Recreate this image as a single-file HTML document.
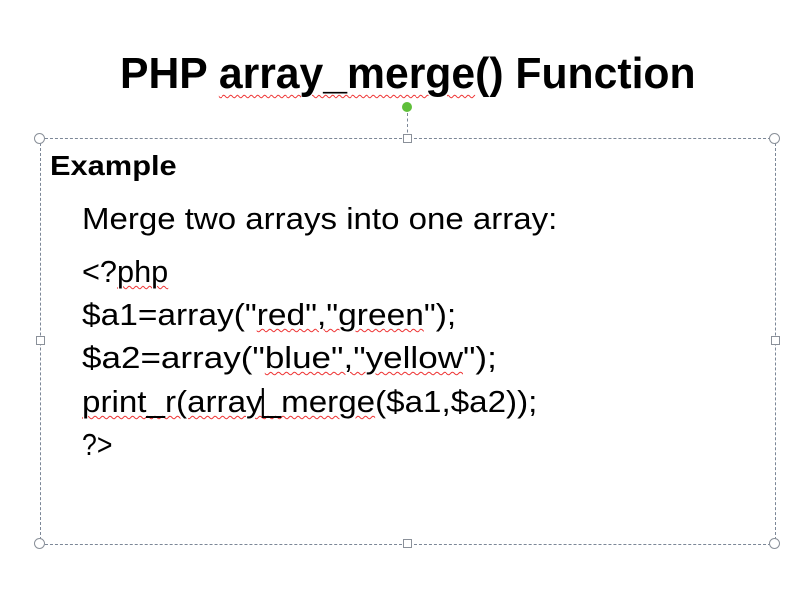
<!DOCTYPE html>
<html><head><style>
body{margin:0;width:812px;height:605px;background:#fff;position:relative;overflow:hidden;font-family:"Liberation Sans",sans-serif;color:#000}
.t{position:absolute;white-space:nowrap;transform-origin:left top;line-height:1;font-size:31px}
.w{text-decoration:underline wavy #e33;text-decoration-thickness:1px;text-underline-offset:3px}
.h{position:absolute;width:9px;height:9px;border:1px solid #8a9099;border-radius:50%;background:#fff}
.s{position:absolute;width:7px;height:7px;border:1px solid #8a9099;background:#fff}
.c{display:inline-block;width:2px;height:30px;background:#000;vertical-align:-6px;margin:0 -1px}
</style></head><body>
<div class="t" style="left:120px;top:52px;font-size:44px;font-weight:bold;transform:scaleX(0.97)">PHP <span class="w" style="text-underline-offset:6px">array_merge</span>() Function</div>
<div style="position:absolute;left:40px;top:138px;width:734px;height:405px;border:1px dashed #7c8797"></div>
<div style="position:absolute;left:407px;top:113px;height:25px;border-left:1px dashed #7c8797"></div>
<div style="position:absolute;left:402px;top:102px;width:10px;height:10px;border-radius:50%;background:#5fbf3a"></div>
<div class="h" style="left:34px;top:133px"></div><div class="h" style="left:769px;top:133px"></div>
<div class="h" style="left:34px;top:538px"></div><div class="h" style="left:769px;top:538px"></div>
<div class="s" style="left:403px;top:134px"></div><div class="s" style="left:403px;top:539px"></div>
<div class="s" style="left:36px;top:336px"></div><div class="s" style="left:771px;top:336px"></div>
<div class="t" style="left:50px;top:152px;font-size:28px;font-weight:bold;transform:scaleX(1.1)">Example</div>
<div class="t" style="left:82px;top:203px;transform:scaleX(1.065)">Merge two arrays into one array:</div>
<div class="t" style="left:82px;top:256px;transform:scaleX(0.99)">&lt;?<span class="w">php</span></div>
<div class="t" style="left:82px;top:299px;transform:scaleX(1.08)">$a1=array("<span class="w">red","green</span>");</div>
<div class="t" style="left:82px;top:342px;transform:scaleX(1.13)">$a2=array("<span class="w">blue","yellow</span>");</div>
<div class="t" style="left:82px;top:386px;transform:scaleX(1.07)"><span class="w">print_r(array<span class="c"></span>_merge</span>($a1,$a2));</div>
<div class="t" style="left:82px;top:429px;transform:scaleX(0.86)">?&gt;</div>
</body></html>
